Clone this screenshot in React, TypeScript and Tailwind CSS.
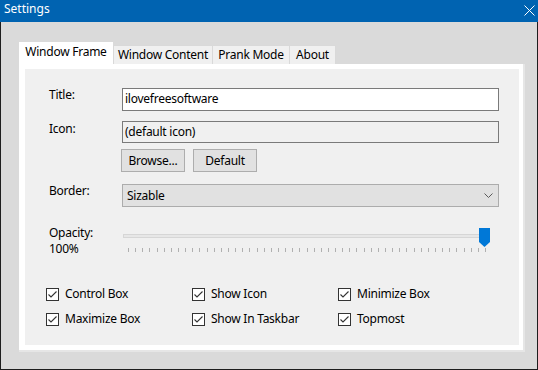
import React from "react";

const font = { fontFamily: '"Noto Sans", "Segoe UI", sans-serif' };

function Check({ label }: { label: string }) {
  return (
    <div className="flex items-center h-[16px] w-[146px]">
      <div className="w-[13px] h-[13px] border border-[#333333] bg-white flex items-center justify-center shrink-0">
        <svg width="11" height="11" viewBox="0 0 11 11">
          <path d="M1.5 5.5 L4 8 L9.5 2.5" fill="none" stroke="#333333" strokeWidth="1.1" />
        </svg>
      </div>
      <span className="ml-[6px] text-[12px] leading-[16px] text-black whitespace-nowrap">{label}</span>
    </div>
  );
}

export default function App() {
  const ticks = Array.from({ length: 51 }, (_, i) => 6 + Math.round(i * 7.14));
  return (
    <div className="w-[538px] h-[370px] flex flex-col text-[12px] tracking-[-0.25px] text-black" style={font}>
      <div className="h-[22px] bg-[#0063b1] flex items-start justify-between pl-[4px] pr-[3px] text-white shrink-0">
        <span className="leading-[16px] pt-[1px] tracking-normal">Settings</span>
        <svg width="11" height="11" viewBox="0 0 11 11" className="mt-[5px]">
          <path d="M0.5 0.5 L10.5 10.5 M10.5 0.5 L0.5 10.5" stroke="white" strokeWidth="1" />
        </svg>
      </div>
      <div className="flex-1 bg-[#dadada] border-x border-b border-[#1e1e1e] pl-[18px] pt-[20px]">
        <div className="flex items-end h-[22px]">
          <div className="w-[94px] h-[24px] bg-white flex justify-center pt-[2px] leading-[16px] relative z-10 mb-[-2px]">
            Window Frame
          </div>
          <div className="w-[100px] h-[19px] bg-[#f0f0f0] border border-b-0 border-[#d9d9d9] flex justify-center leading-[16px] pt-[1px]">
            Window Content
          </div>
          <div className="w-[77px] h-[19px] bg-[#f0f0f0] border border-l-0 border-b-0 border-[#d9d9d9] flex justify-center leading-[16px] pt-[1px]">
            Prank Mode
          </div>
          <div className="w-[46px] h-[19px] bg-[#f0f0f0] border border-l-0 border-b-0 border-[#d9d9d9] flex justify-center leading-[16px] pt-[1px]">
            About
          </div>
        </div>
        <div className="w-[506px] h-[288px] bg-white border-r-2 border-b-2 border-[#e6e6e6] pt-[5px] pl-[6px]">
          <div className="w-[494px] h-[276px] bg-[#f0f0f0] pl-[24px] pt-[19px] flex flex-col">
            <div className="flex items-start">
              <div className="w-[73px] leading-[16px] mt-[-1px]">Title:</div>
              <div className="w-[377px] h-[23px] border border-[#7a7a7a] bg-white pl-[2px] leading-[20px]">
                ilovefreesoftware
              </div>
            </div>
            <div className="flex items-start mt-[10px]">
              <div className="w-[73px] leading-[16px]">Icon:</div>
              <div className="w-[377px] h-[22px] border border-[#7a7a7a] bg-[#f0f0f0] pl-[2px] leading-[20px]">
                (default icon)
              </div>
            </div>
            <div className="flex mt-[6px] ml-[72px]">
              <div className="w-[64px] h-[23px] bg-[#e1e1e1] border border-[#adadad] flex items-center justify-center leading-[16px]">
                Browse...
              </div>
              <div className="w-[64px] h-[23px] ml-[8px] bg-[#e1e1e1] border border-[#adadad] flex items-center justify-center leading-[16px]">
                Default
              </div>
            </div>
            <div className="flex items-start mt-[12px]">
              <div className="w-[73px] leading-[16px] mt-[-1px]">Border:</div>
              <div className="w-[377px] h-[23px] border border-[#acacac] bg-[#e1e1e1] pl-[4px] pr-[4px] flex items-center justify-between leading-[16px]">
                <span>Sizable</span>
                <svg width="9" height="5" viewBox="0 0 9 5" className="mr-[1px]">
                  <path d="M0.5 0.5 L4.5 4.5 L8.5 0.5" fill="none" stroke="#5a5a5a" strokeWidth="1" />
                </svg>
              </div>
            </div>
            <div className="flex items-start mt-[18px] h-[32px]">
              <div className="w-[73px] leading-[16px]">
                <div>Opacity:</div>
                <div>100%</div>
              </div>
              <div className="relative w-[370px] h-[30px]">
                <div className="absolute left-[1px] top-[9px] w-[364px] h-[4px] bg-[#e7e7e7] border border-[#d6d6d6]" />
                <svg className="absolute left-0 top-[23px]" width="370" height="4" viewBox="0 0 370 4">
                  {ticks.map((x, i) => (
                    <rect key={i} x={x} y={0} width={1} height={4} fill="#b0b0b0" />
                  ))}
                </svg>
                <svg className="absolute left-[357px] top-[3px]" width="11" height="19" viewBox="0 0 11 19">
                  <path d="M0 0 H11 V14 L5.5 19 L0 14 Z" fill="#0078d7" />
                </svg>
              </div>
            </div>
            <div className="mt-[29px] ml-[-3px] flex flex-col gap-[9px]">
              <div className="flex">
                <Check label="Control Box" />
                <Check label="Show Icon" />
                <Check label="Minimize Box" />
              </div>
              <div className="flex">
                <Check label="Maximize Box" />
                <Check label="Show In Taskbar" />
                <Check label="Topmost" />
              </div>
            </div>
          </div>
        </div>
      </div>
    </div>
  );
}
